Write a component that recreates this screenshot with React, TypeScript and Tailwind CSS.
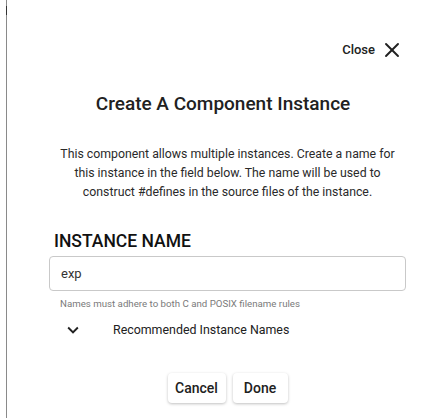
import { X } from "lucide-react";

function ExpandIcon() {
  return (
    <svg viewBox="0 0 24 24" className="w-[22px] h-[22px] fill-[#212121]">
      <path d="M16.59 8.59 12 13.17 7.41 8.59 6 10l6 6 6-6z" />
    </svg>
  );
}

export default function App(): JSX.Element {
  return (
    <div className="min-h-screen bg-white font-['Roboto',sans-serif] text-[#212121]">
      <div className="relative ml-[6px] min-h-[418px] border-l border-[#8a8a8a]">
        <div className="absolute -left-px top-[6px] h-[9px] w-px bg-[#333]" />

        <div className="flex justify-end pt-[38px] pr-[28px]">
          <button className="flex items-center gap-[5px] text-[13px] font-medium leading-5">
            Close
            <X className="w-6 h-6" strokeWidth={1.9} />
          </button>
        </div>

        <div className="ml-[42px] w-[357px] flex flex-col">
          <h2 className="mt-[30px] pr-[9px] text-center text-[19px] font-medium leading-6">
            Create A Component Instance
          </h2>

          <p className="mt-[29px] text-center text-[12.3px] leading-[19px] text-[#2a2a2a]">
            This component allows multiple instances. Create a name for
            <br />
            this instance in the field below. The name will be used to
            <br />
            construct #defines in the source files of the instance.
          </p>

          <label className="mt-[27px] ml-[5px] text-[17.5px] font-medium leading-6 text-[#111]">
            INSTANCE NAME
          </label>

          <input
            defaultValue="exp"
            className="mt-[3px] h-[35px] w-full rounded-[4px] border border-[#c9c9c9] px-[11px] text-[13px] text-[#333] outline-none"
          />

          <span className="mt-[6px] ml-[11px] text-[9.7px] leading-[14px] text-[#7a7a7a]">
            Names must adhere to both C and POSIX filename rules
          </span>

          <div className="mt-[9px] flex items-center h-5 text-[12.4px]">
            <span className="ml-[13px] flex items-center">
              <ExpandIcon />
            </span>
            <span className="ml-[29px]">Recommended Instance Names</span>
          </div>

          <div className="mt-[33px] flex justify-center gap-[7px]">
            <button className="h-[30px] w-[58px] rounded-[4px] bg-white text-[14px] font-medium shadow-[0_1px_3px_rgba(0,0,0,0.25)]">
              Cancel
            </button>
            <button className="h-[30px] w-[55px] rounded-[4px] bg-white text-[14px] font-medium shadow-[0_1px_3px_rgba(0,0,0,0.25)]">
              Done
            </button>
          </div>
        </div>
      </div>
    </div>
  );
}
